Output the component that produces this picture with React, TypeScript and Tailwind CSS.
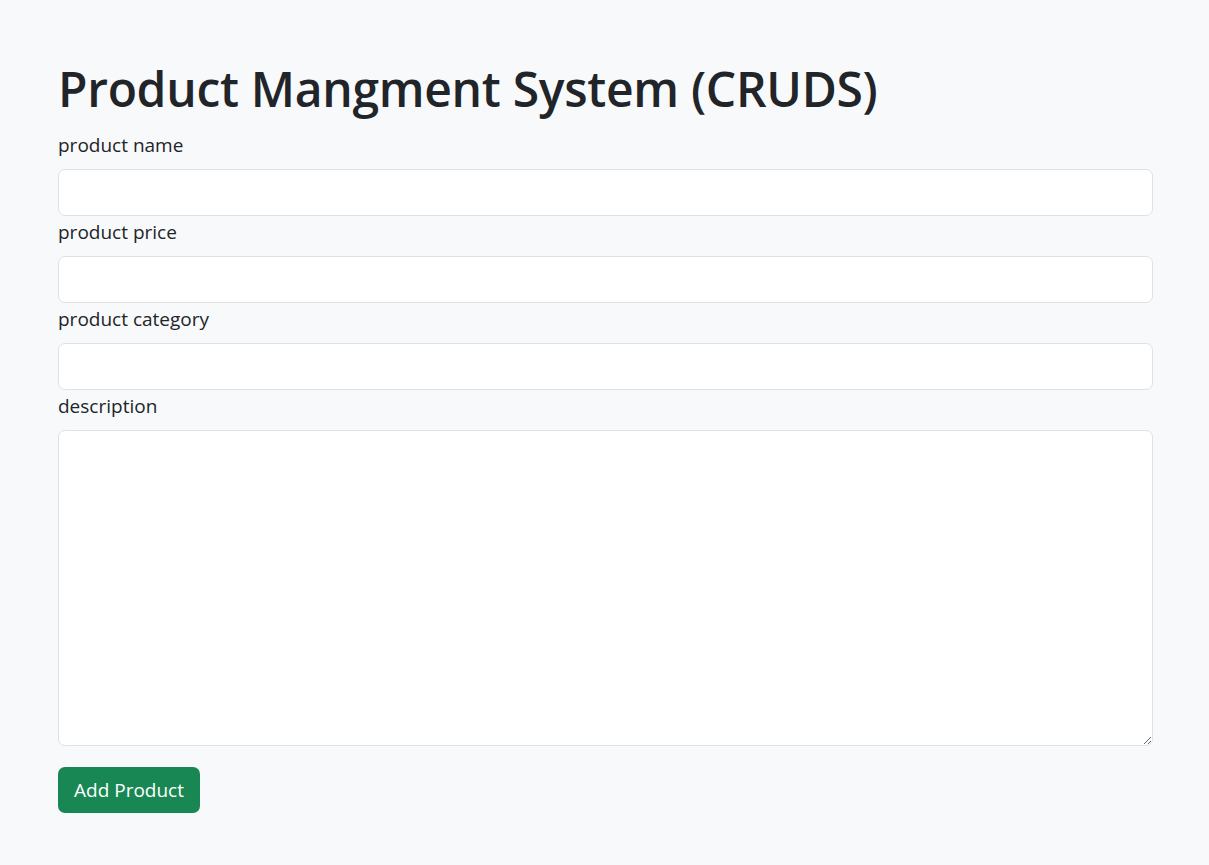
export default function App() {
  const fields = ["product name", "product price", "product category"];

  return (
    <div
      className="min-h-[865px] bg-[#f8f9fa] text-[#212529]"
      style={{ fontFamily: '"Open Sans", "Noto Sans", sans-serif' }}
    >
      <div className="ml-[58px] w-[1095px] pt-[59px]">
        {/* Title */}
        <h1 className="text-[48px] leading-[60px] font-semibold mb-[12px] tracking-[-0.3px]">
          Product Mangment System (CRUDS)
        </h1>

        {/* Inputs */}
        {fields.map((f) => (
          <div key={f}>
            <label className="block text-[19px] leading-[28px] mb-[10px]">{f}</label>
            <input
              type="text"
              className="block w-full h-[47px] bg-white border border-[#dee2e6] rounded-[7px] mb-[2px] px-4 outline-none"
            />
          </div>
        ))}

        <label className="block text-[19px] leading-[28px] mb-[10px]">description</label>
        <textarea className="block w-full h-[316px] bg-white border border-[#dee2e6] rounded-[7px] px-4 py-2 outline-none"></textarea>

        <button className="mt-[21px] h-[46px] w-[142px] rounded-[7px] bg-[#198754] text-white text-[19px]">
          Add Product
        </button>
      </div>
    </div>
  );
}
